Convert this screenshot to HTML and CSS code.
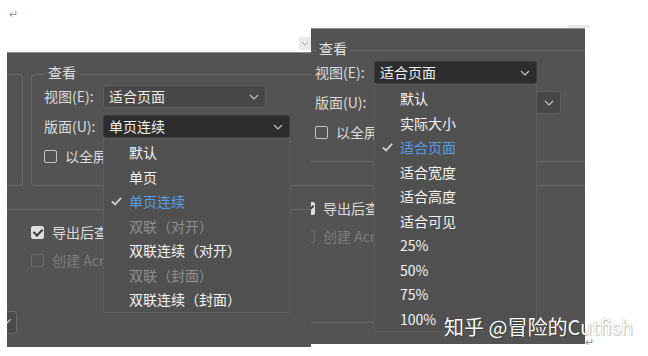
FILE: index.html
```html
<!DOCTYPE html>
<html lang="zh-CN">
<head>
<meta charset="UTF-8">
<title>查看</title>
<link rel="stylesheet" href="styles.css">
</head>
<body>
<div class="desk">
	<span class="ret ret-top">↵</span>
	<div class="tab-stub"><svg viewBox="0 0 10 6" class="chev chev-dim"><path d="M1 1l4 4 4-4"/></svg></div>
	<div class="top-bar"></div>

	<!-- 左边：版面下拉 -->
	<div class="win win-left">
		<div class="top-row">
			<div class="side-group"></div>
			<div class="group">
				<span class="legend">查看</span>
				<div class="field">
					<span class="label">视图(E):</span>
					<div class="select sel-short"><span>适合页面</span><svg viewBox="0 0 10 6" class="chev"><path d="M1 1l4 4 4-4"/></svg></div>
				</div>
				<div class="field">
					<span class="label">版面(U):</span>
					<div class="select sel-long open"><span>单页连续</span><svg viewBox="0 0 10 6" class="chev"><path d="M1 1l4 4 4-4"/></svg>
						<ul class="menu">
							<li>默认</li>
							<li>单页</li>
							<li class="on"><svg viewBox="0 0 12 10" class="tick"><path d="M1 5.5l3.5 3.3L11 1.5"/></svg>单页连续</li>
							<li class="off">双联（对开）</li>
							<li>双联连续（对开）</li>
							<li class="off">双联（封面）</li>
							<li>双联连续（封面）</li>
						</ul>
					</div>
				</div>
				<div class="check"><i class="box"></i>以全屏模式打开</div>
			</div>
		</div>
		<div class="sep"></div>
		<div class="opt"><i class="box checked"></i>导出后查看 PDF</div>
		<div class="opt dis"><i class="box"></i>创建 Acrobat 图层</div>
		<div class="stub-btn"><svg viewBox="0 0 20 21"><path d="M4 11l3 3 7-7"/></svg></div>
	</div>

	<!-- 右边：视图下拉 -->
	<div class="win win-right">
		<div class="group">
			<span class="legend">查看</span>
			<div class="field">
				<span class="label">视图(E):</span>
				<div class="select sel-short open"><span>适合页面</span><svg viewBox="0 0 10 6" class="chev"><path d="M1 1l4 4 4-4"/></svg>
					<ul class="menu">
						<li>默认</li>
						<li>实际大小</li>
						<li class="on"><svg viewBox="0 0 12 10" class="tick"><path d="M1 5.5l3.5 3.3L11 1.5"/></svg>适合页面</li>
						<li>适合宽度</li>
						<li>适合高度</li>
						<li>适合可见</li>
						<li>25%</li>
						<li>50%</li>
						<li>75%</li>
						<li>100%</li>
					</ul>
				</div>
			</div>
			<div class="field">
				<span class="label">版面(U):</span>
				<div class="select sel-long"><span>单页连续</span><svg viewBox="0 0 10 6" class="chev"><path d="M1 1l4 4 4-4"/></svg></div>
			</div>
			<div class="check"><i class="box"></i>以全屏模式打开</div>
		</div>
		<div class="sep"></div>
		<div class="opt"><i class="box checked"></i>导出后查看 PDF</div>
		<div class="opt dis"><i class="box"></i>创建 Acrobat 图层</div>
		<div class="sep sep-low"></div>
	</div>

	<span class="ret ret-bottom">↵</span>
	<div class="watermark">知乎 @冒险的Cutfish</div>
</div>
</body>
</html>
```

FILE: styles.css
```css
*{
	margin: 0;
	padding: 0;
	box-sizing: border-box;
}
li{
	list-style: none;
}
html,body{
	width: 648px;
	height: 356px;
	overflow: hidden;
	background: #fff;
}
body{
	font-family: "Noto Sans CJK SC", "Microsoft YaHei", sans-serif;
	font-size: 14px;
	color: #dcdcdc;
}
.desk{
	position: relative;
	width: 648px;
	height: 356px;
}

/* 小零碎 */
.ret{
	position: absolute;
	font-size: 11px;
	line-height: 12px;
	color: #9a9a9a;
}
.ret-top{
	left: 9px;
	top: 7px;
}
.ret-bottom{
	left: 585px;
	top: 335px;
	color: #8a8a8a;
}
.tab-stub{
	position: absolute;
	left: 299px;
	top: 37px;
	width: 12px;
	height: 13px;
	background: #ebebeb;
	display: flex;
	align-items: center;
	justify-content: center;
}
.top-bar{
	position: absolute;
	left: 568px;
	top: 25px;
	width: 22px;
	height: 3px;
	background: #e8e8e8;
}

/* 窗口 */
.win{
	position: absolute;
	background: #535353;
	border-top: 1px solid #8e8e8e;
	overflow: hidden;
	padding-top: 21px;
}
.win-left{
	left: 7px;
	top: 52px;
	width: 304px;
	height: 295px;
}
.win-right{
	left: 311px;
	top: 28px;
	width: 274px;
	height: 316px;
	z-index: 2;
}
.top-row{
	display: flex;
	gap: 8px;
}
.side-group{
	flex: none;
	width: 16px;
	height: 112px;
	border: 1px solid #686868;
	border-left: none;
	border-radius: 0 4px 4px 0;
}
.group{
	position: relative;
	flex: none;
	width: 330px;
	height: 112px;
	border: 1px solid #686868;
	border-radius: 4px;
	padding: 10px 0 0 12px;
}
.win-right .group{
	margin-left: -9px;
}
.legend{
	position: absolute;
	top: -13px;
	left: 13px;
	padding: 0 3px;
	background: #535353;
	line-height: 20px;
	color: #e0e0e0;
}

/* 下拉框 */
.field{
	display: flex;
	align-items: center;
	height: 23px;
}
.field+.field{
	margin-top: 7px;
}
.label{
	flex: none;
	width: 59px;
	line-height: 23px;
	white-space: nowrap;
}
.select{
	position: relative;
	flex: none;
	display: flex;
	align-items: center;
	justify-content: space-between;
	height: 23px;
	padding: 0 6px 0 5px;
	background: #474747;
	border: 1px solid #5f5f5f;
	border-radius: 3px;
	color: #f0f0f0;
	line-height: 21px;
}
.sel-short{
	width: 163px;
}
.sel-long{
	width: 187px;
}
.select.open{
	background: #2d2d2d;
	border-color: #3b3b3b;
}
.chev{
	width: 10px;
	height: 6px;
	fill: none;
	stroke: #c4c4c4;
	stroke-width: 1.2;
}
.chev-dim{
	width: 8px;
	height: 5px;
	stroke: #9c9c9c;
}
.menu{
	position: absolute;
	top: calc(100% + 1px);
	left: -1px;
	right: -1px;
	z-index: 5;
	background: #505050;
	border: 1px solid #5d5d5d;
	padding-top: 1px;
}
.menu li{
	position: relative;
	height: 24.5px;
	line-height: 24.5px;
	padding-left: 25px;
	color: #f4f4f4;
	white-space: nowrap;
}
.menu li.on{
	color: #569ee2;
}
.menu li.off{
	color: #8e8e8e;
}
.tick{
	position: absolute;
	left: 7px;
	top: 7px;
	width: 11px;
	height: 10px;
	fill: none;
	stroke: #cfcfcf;
	stroke-width: 2;
}

/* 复选框 */
.check,.opt{
	display: flex;
	align-items: center;
	height: 20px;
	white-space: nowrap;
}
.check{
	margin-top: 8px;
}
.box{
	flex: none;
	position: relative;
	width: 13px;
	height: 13px;
	margin-right: 8px;
	border: 1px solid #c6c6c6;
	border-radius: 2px;
}
.box.checked{
	background: #dedede;
	border-color: #dedede;
}
.box.checked::after{
	content: "";
	position: absolute;
	left: 3px;
	top: 0px;
	width: 4px;
	height: 7px;
	border-right: 2px solid #3a3a3a;
	border-bottom: 2px solid #3a3a3a;
	transform: rotate(45deg);
}
.sep{
	height: 0;
	margin-top: 23px;
	border-top: 1px solid #686868;
}
.sep-low{
	margin-top: 76px;
}
.opt{
	margin-top: 12px;
}
.opt+.opt{
	margin-top: 8px;
}
.win-left .opt{
	margin-left: 24px;
}
.win-right .opt{
	margin-left: -9px;
}
.opt.dis{
	color: #7c7c7c;
}
.opt.dis .box{
	border-color: #6c6c6c;
}
.stub-btn{
	width: 20px;
	height: 23px;
	margin: 41px 0 0 -10px;
	border: 1px solid #6c6c6c;
	border-radius: 3px;
	background: #4b4b4b;
}
.stub-btn svg{
	display: block;
	width: 18px;
	height: 21px;
	fill: none;
	stroke: #cfcfcf;
	stroke-width: 1.3;
}

/* 水印 */
.watermark{
	position: absolute;
	left: 444px;
	top: 314px;
	z-index: 10;
	font-size: 20px;
	line-height: 26px;
	color: #fff;
	white-space: nowrap;
	text-shadow: 0 0 1px rgba(0,0,0,.45), 1px 1px 1px rgba(0,0,0,.2);
}
```
